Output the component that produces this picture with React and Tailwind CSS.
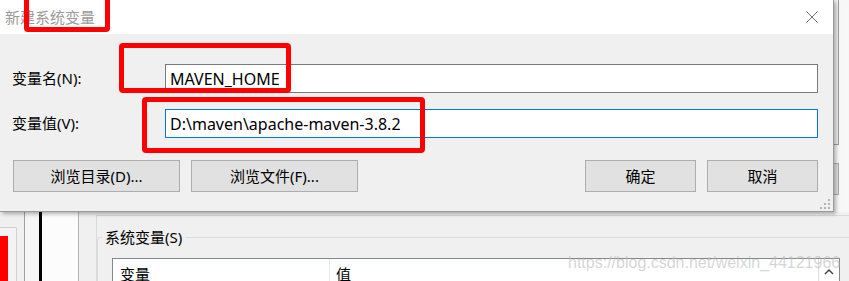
import React from "react";

const Btn = ({ w, children }) => (
  <button className={`${w} h-[32px] bg-[#e1e1e1] border border-[#adadad] text-[15px] leading-none text-black flex items-center justify-center`}>
    {children}
  </button>
);

const Field = ({ label, value, active }) => (
  <div className="flex items-center pl-[12px]">
    <div className="w-[153px] text-[15px] text-black">{label}</div>
    <div
      className={`w-[653px] h-[29px] bg-white border flex items-center pl-[4px] text-[16px] text-black ${
        active ? "border-[#0078d7]" : "border-[#7a7a7a]"
      }`}
    >
      {value}
    </div>
  </div>
);

const Grip = () => (
  <svg width="12" height="12" viewBox="0 0 12 12">
    <rect x="9" y="1" width="2" height="2" fill="#b4b4b4" />
    <rect x="5" y="5" width="2" height="2" fill="#b4b4b4" />
    <rect x="9" y="5" width="2" height="2" fill="#b4b4b4" />
    <rect x="1" y="9" width="2" height="2" fill="#b4b4b4" />
    <rect x="5" y="9" width="2" height="2" fill="#b4b4b4" />
    <rect x="9" y="9" width="2" height="2" fill="#b4b4b4" />
  </svg>
);

const App = () => {
  return (
    <div className="relative w-[849px] h-[281px] overflow-hidden bg-[#f0f0f0] font-['Noto_Sans','Noto_Sans_CJK_SC',sans-serif]">
      {/* dialog + what shows to its right */}
      <div className="flex h-[212px]">
        <div className="relative z-10 w-[834px] h-[212px] flex flex-col border-r border-b border-[#9a9a9a] bg-[#f0f0f0] shadow-[2px_2px_4px_rgba(0,0,0,0.3)]">
          <div className="h-[34px] bg-white flex items-center justify-between pl-[5px] pr-[15px]">
            <span className="text-[15px] text-[#9b9b9b]">新建系统变量</span>
            <svg width="12" height="12" viewBox="0 0 12 12">
              <path d="M0.5 0.5 L11.5 11.5 M11.5 0.5 L0.5 11.5" stroke="#6f6f6f" strokeWidth="1" />
            </svg>
          </div>
          <div className="flex flex-col pt-[30px]">
            <Field label="变量名(N):" value="MAVEN_HOME" />
            <div className="mt-[16px]">
              <Field label="变量值(V):" value="D:\maven\apache-maven-3.8.2" active />
            </div>
            <div className="mt-[22px] flex items-center pl-[13px] pr-[15px]">
              <div className="flex gap-[11px]">
                <Btn w="w-[167px]">浏览目录(D)...</Btn>
                <Btn w="w-[167px]">浏览文件(F)...</Btn>
              </div>
              <div className="ml-auto flex gap-[11px]">
                <Btn w="w-[111px]">确定</Btn>
                <Btn w="w-[111px]">取消</Btn>
              </div>
            </div>
            <div className="mt-[6px] flex justify-end pr-[2px]">
              <Grip />
            </div>
          </div>
        </div>
        <div className="flex-1 flex flex-col bg-[#f7f7f7]">
          <div className="w-[5px] h-[145px] border-r border-b border-[#a0a0a0] bg-[#f0f0f0]" />
          <div className="mt-[18px] w-[5px] h-[32px] border-r border-y border-[#adadad] bg-[#e1e1e1]" />
        </div>
      </div>

      {/* window behind the dialog */}
      <div className="flex h-[69px]">
        <div className="w-[24px] pt-[15px]">
          <div className="h-full w-[17px] border-t border-r border-[#d0d0d0] rounded-tr-[2px] bg-[#f3f3f3] pt-[8px]">
            <div className="h-full w-[8px] bg-[#ff0000]" />
          </div>
        </div>
        <div className="w-[1px] bg-[#a0a0a0]" />
        <div className="w-[14px] bg-[#f6f6f6]" />
        <div className="w-[3px] bg-black" />
        <div className="w-[36px] bg-[#fcfcfc]" />
        <div className="w-[1px] bg-[#b4b4b4]" />
        <div className="w-[17px]" />
        <div className="flex-1 mt-[3px] border-t border-l border-[#dadada]">
          <fieldset className="mt-[11px] pl-[4px] border-t border-l border-[#dcdcdc] rounded-tl-[3px] h-[60px]">
            <legend className="px-[3px] text-[15px] leading-[20px] text-black">系统变量(S)</legend>
            <div className="ml-[10px] mt-[11px] w-[728px] h-[40px] bg-white border border-[#828790] flex">
              <div className="w-[217px] h-[30px] flex items-center pl-[7px] border-r border-[#e5e5e5] text-[15px] text-black">变量</div>
              <div className="flex-1 h-[30px] flex items-center pl-[6px] text-[15px] text-black">值</div>
              <div className="w-[21px] border-l border-[#dcdcdc] flex justify-center pt-[9px]">
                <svg width="10" height="7" viewBox="0 0 10 7">
                  <path d="M1 6 L5 2 L9 6" stroke="#444" strokeWidth="1.5" fill="none" />
                </svg>
              </div>
            </div>
          </fieldset>
        </div>
      </div>

      {/* csdn watermark */}
      <div className="absolute z-20 left-[568px] top-[251px] text-[16px] font-['Liberation_Sans',sans-serif] text-[rgba(185,185,185,0.6)] whitespace-nowrap">
        https://blog.csdn.net/weixin_44121966
      </div>

      {/* red annotation boxes */}
      <div className="absolute z-20 left-[24px] top-[-6px] w-[86px] h-[38px] border-[5px] border-[#ff0000] rounded-[4px]" />
      <div className="absolute z-20 left-[119px] top-[43px] w-[172px] h-[50px] border-[5px] border-[#ff0000] rounded-[4px]" />
      <div className="absolute z-20 left-[142px] top-[97px] w-[283px] h-[56px] border-[5px] border-[#ff0000] rounded-[4px]" />
    </div>
  );
};

export default App;
